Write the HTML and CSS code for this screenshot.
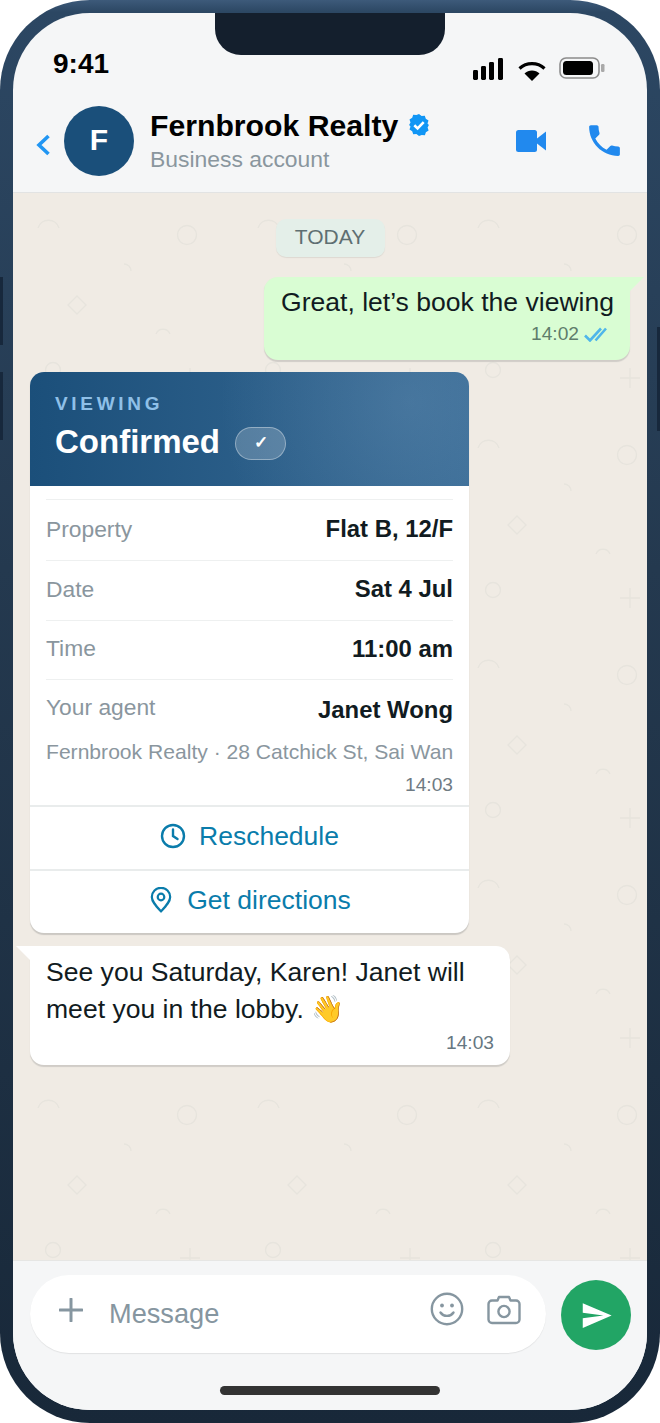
FILE: index.html
```html
<!DOCTYPE html>
<html lang="en">
<head>
<meta charset="utf-8">
<title>Fernbrook Realty chat</title>
<link rel="stylesheet" href="styles.css">
</head>
<body>
<div class="phone">
  <span class="side side-l1"></span>
  <span class="side side-l2"></span>
  <span class="side side-r"></span>
  <div class="screen">
    <div class="notch"></div>
    <div class="status">
      <span class="clock">9:41</span>
      <div class="status-icons">
        <svg class="ic-signal" width="30" height="22" viewBox="0 0 30 22"><rect x="0" y="12" width="5" height="10" rx="1.4"/><rect x="8" y="8" width="5" height="14" rx="1.4"/><rect x="16" y="4" width="5" height="18" rx="1.4"/><rect x="25" y="0" width="5" height="22" rx="1.4"/></svg>
        <svg class="ic-wifi" width="28" height="20" viewBox="0 0 28 20"><path d="M1.5 7.5C8.5 1 19.5 1 26.5 7.5" fill="none" stroke="#000" stroke-width="3.2"/><path d="M6.5 12.5C10.5 8.6 17.5 8.6 21.5 12.5L14 20Z"/></svg>
        <svg class="ic-batt" width="46" height="22" viewBox="0 0 46 22"><rect x="1" y="1" width="39" height="20" rx="6" fill="none" stroke="#8c8c8c" stroke-width="1.6"/><rect x="4" y="4" width="30" height="14" rx="3.5"/><rect x="42" y="7" width="3.5" height="8" rx="1.2" fill="#a9a9a9"/></svg>
      </div>
    </div>
    <header class="appbar">
      <svg class="ic-back" width="15" height="24" viewBox="0 0 15 24"><path d="M12.5 3 3 12l9.500 9" fill="none" stroke="#2196f3" stroke-width="3.600"/></svg>
      <div class="avatar">F</div>
      <div class="who">
        <div class="name-row">
          <span class="name">Fernbrook Realty</span>
          <svg class="ic-verified" width="22" height="22" viewBox="0 0 22 22"><path fill="#1196f5" d="M11 0l2.600 1.900 3.200-.2 1 3 2.700 1.800-1 3L20.900 11l-1.300 2.500 1 3-2.700 1.800-1 3-3.200-.2L11 22l-2.600-1.900-3.200.2-1-3-2.700-1.800 1-3L1.100 11l1.400-2.500-1-3 2.700-1.800 1-3 3.200.2z"/><path d="M6.300 11.200l3.300 3.200 6.100-6.200" fill="none" stroke="#fff" stroke-width="2.600"/></svg>
        </div>
        <div class="sub">Business account</div>
      </div>
      <div class="actions">
        <svg class="ic-video" width="30" height="22" viewBox="0 0 30 22"><rect x="0" y="0" width="21" height="22" rx="2.500" fill="#2189ee"/><path fill="#2189ee" d="M21 8.500 30 1.500v19l-9-7z"/></svg>
        <svg class="ic-call" width="41" height="41" viewBox="0 0 24 24"><path fill="#2189ee" d="M6.620 10.790c1.440 2.830 3.760 5.140 6.590 6.590l2.200-2.200c.27-.27.67-.36 1.020-.24 1.120.37 2.330.57 3.570.57.550 0 1 .450 1 1V20c0 .550-.450 1-1 1-9.390 0-17-7.610-17-17 0-.550.450-1 1-1h3.500c.550 0 1 .450 1 1 0 1.250.200 2.450.570 3.570.110.350.030.740-.250 1.020l-2.200 2.200z"/></svg>
      </div>
    </header>
    <main class="chat">
      <div class="date">TODAY</div>
      <div class="bubble out">
        <p class="out-text">Great, let’s book the viewing</p>
        <div class="meta">
          <span class="time time-out">14:02</span>
          <svg class="ic-ticks" width="23" height="15" viewBox="0 0 23 15"><path d="M1 8.500l5 5L17 1.500M11.500 13.500 22 1.500" fill="none" stroke="#4fb6ea" stroke-width="2.600"/></svg>
        </div>
      </div>
      <article class="card">
        <div class="card-head">
          <div class="eyebrow">VIEWING</div>
          <div class="head-row">
            <span class="head-title">Confirmed</span>
            <span class="pill">✓</span>
          </div>
        </div>
        <div class="card-body">
          <div class="row"><span class="label">Property</span><span class="value">Flat B, 12/F</span></div>
          <div class="row"><span class="label">Date</span><span class="value">Sat 4 Jul</span></div>
          <div class="row"><span class="label">Time</span><span class="value">11:00 am</span></div>
          <div class="row row-last"><span class="label">Your agent</span><span class="value">Janet Wong</span></div>
          <div class="address">Fernbrook Realty · 28 Catchick St, Sai Wan</div>
          <div class="time card-time">14:03</div>
        </div>
        <div class="btn">
          <svg class="ic-clock" width="26" height="26" viewBox="0 0 26 26"><circle cx="13" cy="13" r="11" fill="none" stroke="#0a7cab" stroke-width="2.400"/><path d="M13 6.500V13l4.500 3" fill="none" stroke="#0a7cab" stroke-width="2.400" stroke-linecap="round"/></svg>
          <span>Reschedule</span>
        </div>
        <div class="btn">
          <svg class="ic-pin" width="26" height="26" viewBox="0 0 26 26"><path d="M13 24.500C7.500 18.500 3.800 14.500 3.800 10a9.200 9.200 0 0 1 18.400 0c0 4.500-3.700 8.500-9.200 14.500z" fill="none" stroke="#0a7cab" stroke-width="2.200" stroke-linejoin="round"/><circle cx="13" cy="10" r="3.300" fill="none" stroke="#0a7cab" stroke-width="2.200"/></svg>
          <span>Get directions</span>
        </div>
      </article>
      <div class="bubble in">
        <p class="in-text">See you Saturday, Karen! Janet will meet you in the lobby. 👋</p>
        <div class="time in-time">14:03</div>
      </div>
    </main>
    <footer class="composer">
      <div class="field">
        <svg class="ic-plus" width="24" height="24" viewBox="0 0 24 24"><path d="M12 1v22M1 12h22" fill="none" stroke="#8696a0" stroke-width="3" stroke-linecap="round"/></svg>
        <span class="placeholder">Message</span>
        <svg class="ic-smile" width="34" height="34" viewBox="0 0 34 34"><circle cx="17" cy="17" r="15.200" fill="none" stroke="#8696a0" stroke-width="2.400"/><circle cx="12" cy="13.500" r="1.900" fill="#8696a0"/><circle cx="22" cy="13.500" r="1.900" fill="#8696a0"/><path d="M10.500 20.500c3 4.500 10 4.500 13 0" fill="none" stroke="#8696a0" stroke-width="2.400" stroke-linecap="round"/></svg>
        <svg class="ic-cam" width="34" height="30" viewBox="0 0 34 30"><path d="M5 5.500h5.500l1.500-3.500h10l1.500 3.500H29a3.500 3.500 0 0 1 3.500 3.500v15.500A3.500 3.500 0 0 1 29 28H5a3.500 3.500 0 0 1-3.500-3.500V9A3.500 3.500 0 0 1 5 5.500z" fill="none" stroke="#8696a0" stroke-width="2.400" stroke-linejoin="round"/><circle cx="17" cy="16.500" r="5.600" fill="none" stroke="#8696a0" stroke-width="2.400"/></svg>
      </div>
      <div class="send">
        <svg width="33" height="33" viewBox="0 0 24 24"><path fill="#fff" d="M2.010 21 23 12 2.010 3 2 10l15 2-15 2z"/></svg>
      </div>
    </footer>
    <div class="home-row"><span class="home"></span></div>
  </div>
</div>
</body>
</html>
```
FILE: styles.css
```css
* { box-sizing: border-box; }
html, body { margin: 0; padding: 0; background: #fff; }
body { font-family: "Liberation Sans", Arial, sans-serif; color: #111b21; }
p { margin: 0; }

.phone {
  position: relative;
  width: 660px;
  height: 1423px;
  padding: 13px;
  border-radius: 90px;
  background: linear-gradient(180deg, #3d5a7a 0, #2c4763 12px, #24394f 40%, #182839 100%);
  overflow: hidden;
}
.side { position: absolute; width: 3px; background: #17283c; }
.side-l1 { left: 0; top: 277px; height: 68px; }
.side-l2 { left: 0; top: 372px; height: 68px; }
.side-r { right: 0; top: 327px; height: 104px; }

.screen {
  position: relative;
  width: 634px;
  height: 1397px;
  display: flex;
  flex-direction: column;
  border-radius: 77px;
  background: #f5f6f7;
  overflow: hidden;
}
.notch {
  position: absolute;
  left: 202px;
  top: 0;
  width: 230px;
  height: 42px;
  border-radius: 0 0 26px 26px;
  background: #141f2d;
}

.status {
  flex: none;
  height: 81px;
  display: flex;
  justify-content: space-between;
  align-items: flex-start;
  padding: 35px 42px 0 40px;
}
.clock { font-size: 28px; line-height: 32px; font-weight: 700; color: #000; }
.status-icons { display: flex; align-items: flex-start; gap: 16px; padding-top: 10px; }
.ic-wifi { margin-top: 3px; margin-left: -1px; }
.ic-batt { margin-top: -1px; margin-left: -3px; }

.appbar {
  flex: none;
  height: 99px;
  display: flex;
  align-items: flex-start;
  padding: 12px 27px 0 23px;
  border-bottom: 1.5px solid #e2e3e3;
}
.ic-back { margin-top: 27px; flex: none; }
.avatar {
  flex: none;
  width: 70px;
  height: 70px;
  margin-left: 13px;
  border-radius: 50%;
  background: #1a4f7a;
  color: #fff;
  font-size: 30px;
  font-weight: 700;
  line-height: 68px;
  text-align: center;
}
.who { margin-left: 16px; flex: 1; }
.name-row { display: flex; align-items: center; gap: 10px; height: 36px; margin-top: 2px; }
.name { font-size: 30.2px; font-weight: 700; color: #000; line-height: 36px; }
.ic-verified { margin-top: -2px; }
.sub { font-size: 22.9px; line-height: 30px; color: #8a969e; }
.actions { display: flex; align-items: center; gap: 43px; padding-top: 14px; }
.ic-video { margin-top: 0; }
.ic-call { margin: 0 -5px 0 -5px; }

.chat {
  flex: 1;
  min-height: 0;
  display: flex;
  flex-direction: column;
  align-items: flex-start;
  padding: 26px 17px 0;
  background-color: #f0ebe4;
  background-image: url("data:image/svg+xml,%3Csvg xmlns='http://www.w3.org/2000/svg' width='220' height='220' fill='none' stroke='%23e7e4dd' stroke-width='1.400'%3E%3Cpath d='M25 35a11 11 0 0 1 21 0'/%3E%3Ccircle cx='174' cy='42' r='9.500'/%3E%3Cpath d='M111 71a7 7 0 0 1 7 7'/%3E%3Cpath d='M64 103l9 9-9 9-9-9z'/%3E%3Cpath d='M143 141a7.500 7.500 0 0 1 14 0'/%3E%3Ccircle cx='40' cy='177' r='7.500'/%3E%3Cpath d='M177 175v20M167 185h20'/%3E%3C/svg%3E");
  background-size: 220px 220px;
}
.date {
  align-self: center;
  width: 109px;
  height: 38px;
  border-radius: 10px;
  background: #e4efe9;
  box-shadow: 0 1px 1px rgba(0,0,0,.08);
  color: #5f6f72;
  font-size: 21px;
  line-height: 36px;
  text-align: center;
}
.bubble { position: relative; box-shadow: 0 1.5px 1px rgba(11,20,26,.14); }
.bubble::before { content: ""; position: absolute; top: 0; width: 15px; height: 15px; }
.out {
  align-self: flex-end;
  width: 366px;
  height: 83px;
  margin-top: 20px;
  padding: 10px 16px 0 17px;
  background: #d9fdd3;
  border-radius: 14px 0 14px 14px;
}
.out::before { right: -14px; background: #d9fdd3; clip-path: polygon(0 0, 100% 0, 0 100%); }
.out-text { font-size: 26.55px; line-height: 31px; white-space: nowrap; }
.meta { display: flex; justify-content: flex-end; align-items: center; gap: 5px; margin-top: 4px; padding-right: 7px; }
.time { font-size: 19.2px; line-height: 24px; color: #667781; }
.time-out { color: #5f7d6b; }

.card {
  width: 439px;
  margin-top: 12px;
  background: #fff;
  border-radius: 14px;
  box-shadow: 0 1.5px 1px rgba(11,20,26,.16);
  overflow: hidden;
}
.card-head {
  height: 114px;
  padding: 20px 25px 0;
  background: radial-gradient(circle at 380px 30px, rgba(110,150,185,.3), rgba(110,150,185,0) 190px), linear-gradient(90deg, #1b4f7a, #3a6c96);
}
.eyebrow { font-size: 19px; line-height: 24px; font-weight: 700; letter-spacing: 3.7px; color: #8fc0e8; }
.head-row { display: flex; align-items: center; gap: 15px; margin-top: 4px; height: 44px; }
.head-title { font-size: 33px; line-height: 38px; font-weight: 700; color: #fff; }
.pill {
  width: 51px;
  height: 33px;
  border-radius: 17px;
  margin-top: 3px;
  background: rgba(255,255,255,.2);
  border: 1.500px solid rgba(255,255,255,.36);
  color: #fff;
  font-size: 17px;
  font-weight: 700;
  line-height: 29px;
  text-align: center;
}
.card-body { padding: 13px 16px 0 16px; height: 319px; }
.row {
  display: flex;
  justify-content: space-between;
  align-items: center;
  height: 59.5px;
  padding-bottom: 2px;
  border-top: 1.500px solid #eef0f0;
}
.row:first-child { height: 61px; }
.row-last { height: 58px; padding-bottom: 0; }
.row-last .label { margin-bottom: 3px; }
.row-last .value { margin-top: 2px; }
.label { font-size: 22.8px; color: #8a969e; }
.value { font-size: 23.9px; font-weight: 700; color: #111b21; }
.address { font-size: 21.1px; line-height: 26px; color: #8a969e; margin-top: 2px; white-space: nowrap; }
.card-time { text-align: right; margin-top: 8px; color: #6f7b83; }
.btn {
  height: 64px;
  display: flex;
  justify-content: center;
  align-items: center;
  gap: 13px;
  padding-bottom: 4px;
  border-top: 2px solid #e9ecec;
  color: #0a7cab;
  font-size: 26.5px;
}
.in {
  width: 480px;
  height: 119px;
  margin-top: 13px;
  padding: 8px 16px 0 16px;
  background: #fff;
  border-radius: 0 14px 14px 14px;
}
.in::before { left: -14px; background: #fff; clip-path: polygon(0 0, 100% 0, 100% 100%); }
.in-text { font-size: 26.55px; line-height: 37px; width: 440px; font-family: "Liberation Sans", "Noto Color Emoji", sans-serif; }
.in-time { text-align: right; margin-top: 3px; }

.composer {
  flex: none;
  height: 126px;
  display: flex;
  align-items: flex-start;
  padding: 14px 16px 0 17px;
  background: #f5f6f7;
  border-top: 1.500px solid #e6e6e4;
}
.field {
  width: 516px;
  height: 78px;
  display: flex;
  align-items: center;
  padding: 0 25px 0 29px;
  border-radius: 39px;
  background: #fff;
  box-shadow: 0 1px 1px rgba(0,0,0,.08);
}
.ic-plus { flex: none; margin-bottom: 9px; }
.placeholder { flex: 1; margin-left: 26px; font-size: 27.2px; margin-bottom: 1px; color: #8696a0; }
.ic-smile { margin-bottom: 10px; }
.ic-cam { margin-left: 23px; margin-bottom: 9px; }
.send {
  flex: none;
  width: 70px;
  height: 70px;
  margin: 5px 0 0 15px;
  border-radius: 50%;
  background: #22a565;
  display: flex;
  align-items: center;
  justify-content: center;
}
.home-row { flex: none; height: 24px; display: flex; justify-content: center; align-items: flex-start; background: #f5f6f7; }
.home { width: 220px; height: 9px; border-radius: 5px; background: #333; }
```
